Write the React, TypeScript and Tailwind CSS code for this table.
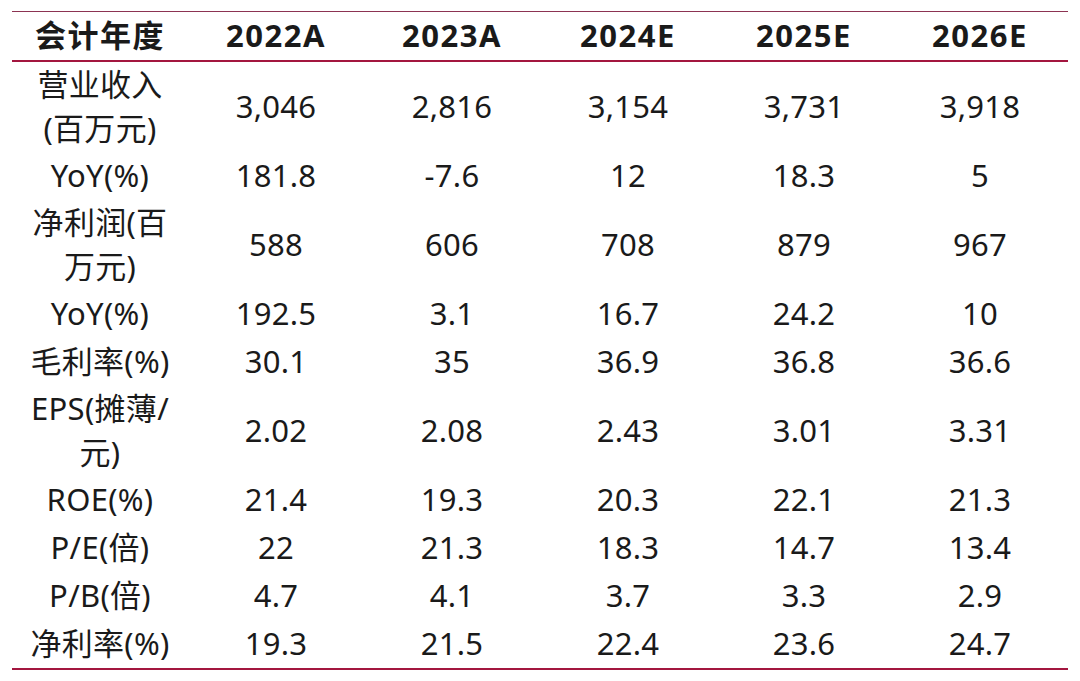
const years = ["2022A", "2023A", "2024E", "2025E", "2026E"];

type Row = { label: string[]; values: string[]; tall?: boolean };

const rows: Row[] = [
  { label: ["营业收入", "(百万元)"], values: ["3,046", "2,816", "3,154", "3,731", "3,918"], tall: true },
  { label: ["YoY(%)"], values: ["181.8", "-7.6", "12", "18.3", "5"] },
  { label: ["净利润(百", "万元)"], values: ["588", "606", "708", "879", "967"], tall: true },
  { label: ["YoY(%)"], values: ["192.5", "3.1", "16.7", "24.2", "10"] },
  { label: ["毛利率(%)"], values: ["30.1", "35", "36.9", "36.8", "36.6"] },
  { label: ["EPS(摊薄/", "元)"], values: ["2.02", "2.08", "2.43", "3.01", "3.31"], tall: true },
  { label: ["ROE(%)"], values: ["21.4", "19.3", "20.3", "22.1", "21.3"] },
  { label: ["P/E(倍)"], values: ["22", "21.3", "18.3", "14.7", "13.4"] },
  { label: ["P/B(倍)"], values: ["4.7", "4.1", "3.7", "3.3", "2.9"] },
  { label: ["净利率(%)"], values: ["19.3", "21.5", "22.4", "23.6", "24.7"] },
];

export default function App() {
  return (
    <div
      className="w-[1080px] h-[681px] bg-white pt-[11px] px-[12px] text-[#1a1a1a]"
      style={{ fontFamily: '"Noto Sans", "Noto Sans CJK SC", sans-serif' }}
    >
      <div className="border-t border-[#8c3352]">
        <div className="grid grid-cols-6 h-[50px] items-center pb-[2px] border-b-2 border-[#a3163f] text-[31px] font-bold tracking-[1.5px]">
          <div className="text-center">会计年度</div>
          {years.map((y) => (
            <div key={y} className="text-center">
              {y}
            </div>
          ))}
        </div>
        {rows.map((r, i) => (
          <div
            key={i}
            className={`grid grid-cols-6 items-center pb-[6px] text-[31px] tracking-[0.3px] ${r.tall ? "h-[90px]" : "h-[48px]"}`}
          >
            <div className="text-center leading-[44px]">
              {r.label.map((l, j) => (
                <div key={j}>{l}</div>
              ))}
            </div>
            {r.values.map((v, j) => (
              <div key={j} className="text-center">
                {v}
              </div>
            ))}
          </div>
        ))}
        <div className="h-[2px] bg-[#a3163f]" />
      </div>
    </div>
  );
}
